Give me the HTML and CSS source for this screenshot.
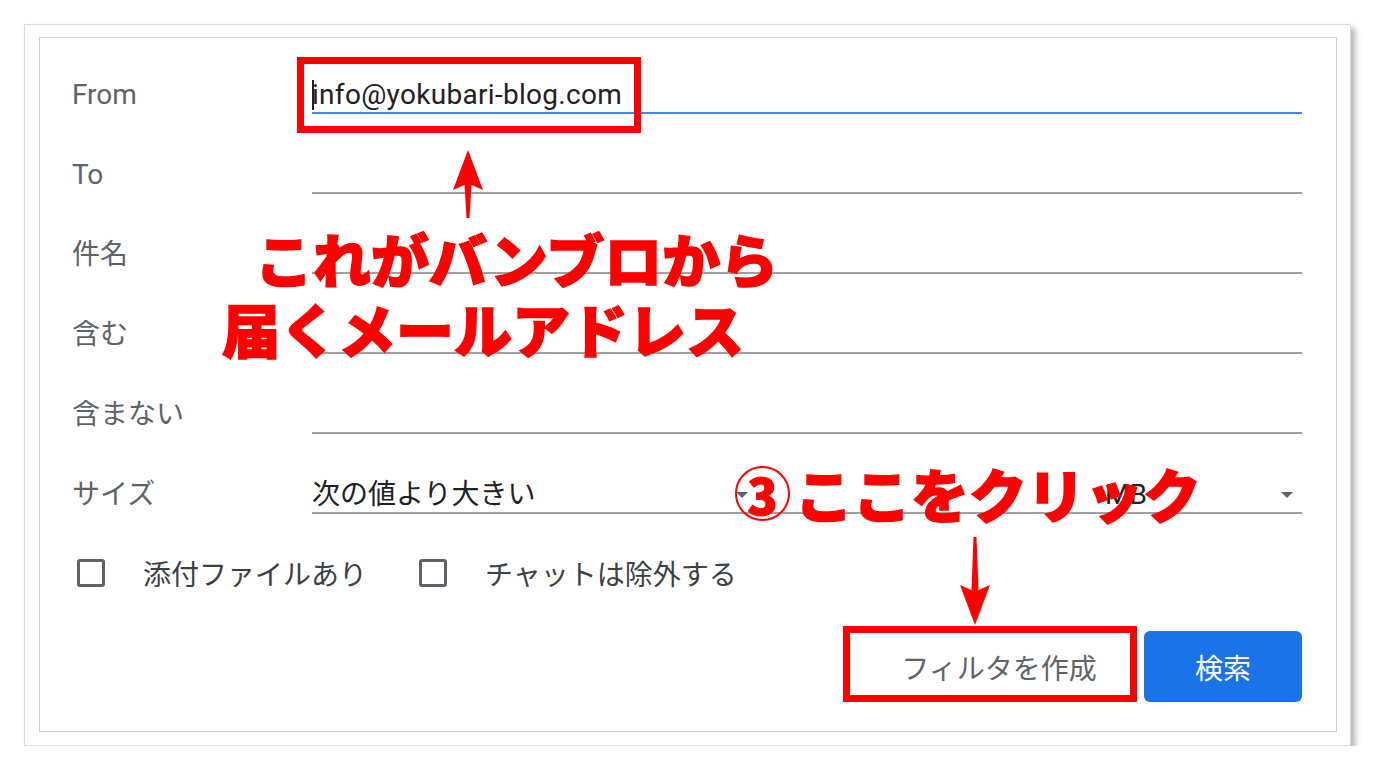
FILE: index.html
```html
<!DOCTYPE html>
<html lang="ja">
<head>
    <meta charset="UTF-8">
    <title>Gmail フィルタ作成</title>
    <link rel="stylesheet" href="styles.css">
</head>
<body>
    <div class="frame">
        <div class="panel">
            <div class="rows">
                <div class="row">
                    <div class="label">From</div>
                    <div class="field active"><span class="caret"></span><span class="value">info@yokubari-blog.com</span></div>
                </div>
                <div class="row">
                    <div class="label">To</div>
                    <div class="field"></div>
                </div>
                <div class="row">
                    <div class="label">件名</div>
                    <div class="field"></div>
                </div>
                <div class="row">
                    <div class="label">含む</div>
                    <div class="field"></div>
                </div>
                <div class="row">
                    <div class="label">含まない</div>
                    <div class="field"></div>
                </div>
                <div class="row">
                    <div class="label">サイズ</div>
                    <div class="field sizeField">
                        <div class="sizeOp">次の値より大きい<span class="dropArrow"></span></div>
                        <div class="sizeNum"></div>
                        <div class="sizeUnit">MB<span class="dropArrow"></span></div>
                    </div>
                </div>
            </div>

            <div class="checks">
                <div class="check"><span class="box"></span><span class="checkText">添付ファイルあり</span></div>
                <div class="check"><span class="box"></span><span class="checkText">チャットは除外する</span></div>
            </div>

            <div class="actions">
                <button class="btnCreate">フィルタを作成</button>
                <button class="btnSearch">検索</button>
            </div>

            <!-- annotations drawn over the form -->
            <div class="redBox boxFrom"></div>
            <svg class="arrow arrowUp" width="30" height="68" viewBox="0 0 30 68">
                <path d="M15 0 L30 40 L18.5 35 L16.5 68 L13.5 68 L11.5 35 L0 40 Z" fill="#ff0000"/>
            </svg>
            <div class="note noteLine1">これがバンブロから</div>
            <div class="note noteLine2">届くメールアドレス</div>

            <div class="circleNum">3</div>
            <div class="note noteClick">ここをクリック</div>
            <svg class="arrow arrowDown" width="30" height="88" viewBox="0 0 30 88">
                <path d="M15 88 L30 48 L18.5 53 L16.5 0 L13.5 0 L11.5 53 L0 48 Z" fill="#ff0000"/>
            </svg>
            <div class="redBox boxCreate"></div>
        </div>
    </div>
</body>
</html>
```

FILE: styles.css
```css
body {
    margin: 0;
    background-color: #fff;
    font-family: Roboto, "Noto Sans CJK JP", sans-serif;
}
.frame {
    margin: 24px 0 0 24px;
    width: 1327px;
    height: 722px;
    box-sizing: border-box;
    padding: 12px 13px 13px 14px;
    border: 1px solid #dcdcdc;
    background-color: #fff;
    box-shadow: 4px 4px 6px rgba(0, 0, 0, 0.3);
}
.panel {
    position: relative;
    height: 695px;
    box-sizing: border-box;
    padding: 28px 34px 0 32px;
    border: 1px solid #cfcfcf;
}
.rows {
    display: flex;
    flex-direction: column;
    gap: 32px;
}
.row {
    display: flex;
    height: 48px;
}
.label,
.field {
    box-sizing: border-box;
    height: 48px;
    padding-top: 12px;
    font-size: 28px;
    line-height: 34px;
}
.label {
    width: 240px;
    color: #5f6368;
}
.field {
    flex: 1;
    color: #202124;
    border-bottom: 2px solid #a0a0a0;
    white-space: nowrap;
}
.field.active {
    border-bottom-color: #4285f4;
}
.value {
    letter-spacing: 0.3px;
}
.caret {
    display: inline-block;
    width: 2px;
    height: 30px;
    margin-right: -2px;
    vertical-align: -6px;
    background-color: #202124;
}
.sizeField {
    display: flex;
}
.sizeOp,
.sizeUnit {
    display: flex;
    justify-content: space-between;
    align-items: center;
    height: 34px;
}
.sizeOp {
    width: 436px;
    padding-right: 2px;
}
.sizeNum {
    flex: 1;
}
.sizeUnit {
    width: 188px;
    padding-right: 9px;
}
.dropArrow {
    width: 0;
    height: 0;
    border-left: 6px solid transparent;
    border-right: 6px solid transparent;
    border-top: 6px solid #5f6368;
}
.checks {
    display: flex;
    align-items: center;
    height: 40px;
    margin-top: 39px;
    padding-left: 5px;
    gap: 52px;
}
.check {
    display: flex;
    align-items: center;
}
.box {
    width: 28px;
    height: 28px;
    box-sizing: border-box;
    border: 3px solid #5f6368;
    border-radius: 3px;
}
.checkText {
    margin-left: 38px;
    font-size: 28px;
    color: #3c4043;
}
.actions {
    display: flex;
    justify-content: flex-end;
    gap: 8px;
    margin-top: 38px;
}
.actions button {
    height: 71px;
    border: none;
    font-family: Roboto, "Noto Sans CJK JP", sans-serif;
    font-size: 28px;
}
.btnCreate {
    width: 274px;
    background-color: #fff;
    color: #5f6368;
}
.btnSearch {
    width: 158px;
    border-radius: 6px;
    background-color: #1a73e8;
    color: #fff;
}
/* annotations */
.redBox {
    position: absolute;
    box-sizing: border-box;
    border: 7px solid #ff0000;
}
.boxFrom {
    left: 257px;
    top: 19px;
    width: 344px;
    height: 76px;
}
.boxCreate {
    left: 803px;
    top: 588px;
    width: 294px;
    height: 76px;
}
.arrow {
    position: absolute;
}
.arrowUp {
    left: 413px;
    top: 112px;
}
.arrowDown {
    left: 920px;
    top: 499px;
}
.note {
    position: absolute;
    font-family: "Noto Sans CJK JP", sans-serif;
    font-size: 58px;
    font-weight: 900;
    line-height: 66px;
    color: #ff0000;
    -webkit-text-stroke: 1.5px #ff0000;
    white-space: nowrap;
}
.noteLine1 {
    left: 215px;
    top: 187px;
}
.noteLine2 {
    left: 182px;
    top: 257px;
}
.noteClick {
    left: 755px;
    top: 422px;
}
.circleNum {
    position: absolute;
    left: 695px;
    top: 428px;
    width: 55px;
    height: 55px;
    box-sizing: border-box;
    border: 2px solid #ff0000;
    border-radius: 50%;
    text-align: center;
    font-family: "Noto Sans CJK JP", sans-serif;
    font-size: 50px;
    font-weight: 900;
    line-height: 51px;
    color: #ff0000;
    -webkit-text-stroke: 1px #ff0000;
}
```
